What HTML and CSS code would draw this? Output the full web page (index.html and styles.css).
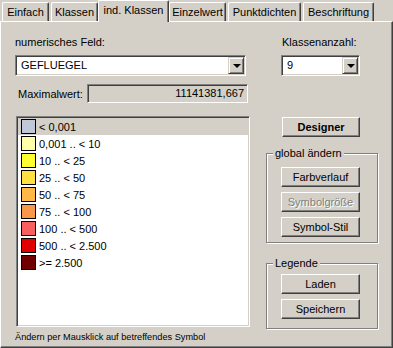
FILE: index.html
```html
<!DOCTYPE html>
<html lang="de">
<head>
  <meta charset="utf-8">
  <link rel="stylesheet" href="styles.css">
</head>
<body>
  <div class="tabs">
    <div class="tab tab-einfach">Einfach</div>
    <div class="tab tab-klassen">Klassen</div>
    <div class="tab tab-ind active">ind. Klassen</div>
    <div class="tab tab-einzel">Einzelwert</div>
    <div class="tab tab-punkt">Punktdichten</div>
    <div class="tab tab-beschr">Beschriftung</div>
  </div>

  <div class="panel">
    <div class="left">
      <div class="caption">numerisches Feld:</div>
      <div class="combo combo-feld">
        <span class="combo-value">GEFLUEGEL</span>
        <span class="drop"></span>
      </div>
      <div class="maxrow">
        <span class="maxlabel">Maximalwert:</span>
        <div class="readonly">11141381,667</div>
      </div>
      <ul class="classlist">
        <li class="selected"><span class="swatch" style="background:#c0c8d8"></span>&lt; 0,001</li>
        <li><span class="swatch" style="background:#ffffa8"></span>0,001 .. &lt; 10</li>
        <li><span class="swatch" style="background:#ffff30"></span>10 .. &lt; 25</li>
        <li><span class="swatch" style="background:#ffe040"></span>25 .. &lt; 50</li>
        <li><span class="swatch" style="background:#ffb848"></span>50 .. &lt; 75</li>
        <li><span class="swatch" style="background:#f89848"></span>75 .. &lt; 100</li>
        <li><span class="swatch" style="background:#f86060"></span>100 .. &lt; 500</li>
        <li><span class="swatch" style="background:#e00000"></span>500 .. &lt; 2.500</li>
        <li><span class="swatch" style="background:#700000"></span>&gt;= 2.500</li>
      </ul>
      <div class="hint">Ändern per Mausklick auf betreffendes Symbol</div>
    </div>

    <div class="right">
      <div class="caption caption-right">Klassenanzahl:</div>
      <div class="combo combo-anzahl">
        <span class="combo-value">9</span>
        <span class="drop"></span>
      </div>
      <button class="btn btn-designer">Designer</button>

      <div class="group group-global">
        <span class="group-title">global ändern</span>
        <button class="btn">Farbverlauf</button>
        <button class="btn" disabled>Symbolgröße</button>
        <button class="btn">Symbol-Stil</button>
      </div>

      <div class="group group-legende">
        <span class="group-title">Legende</span>
        <button class="btn">Laden</button>
        <button class="btn">Speichern</button>
      </div>
    </div>
  </div>
</body>
</html>
```

FILE: styles.css
```css
* {
  box-sizing: border-box;
}

body {
  margin: 0;
  width: 393px;
  height: 348px;
  overflow: hidden;
  background: #d4d0c8;
  font-family: "Liberation Sans", Arial, sans-serif;
  font-size: 11px;
  color: #000;
}

/* tab strip */
.tabs {
  display: flex;
  align-items: flex-end;
  height: 21px;
  padding-left: 2px;
}

.tab {
  height: 19px;
  margin-right: 2px;
  border-top: 1px solid #fff;
  border-left: 1px solid #fff;
  border-right: 1px solid #404040;
  border-radius: 2px 2px 0 0;
  box-shadow: inset -1px 0 #808080;
  text-align: center;
  line-height: 18px;
  white-space: nowrap;
}

.tab-einfach { width: 47px; }
.tab-klassen { width: 47px; }
.tab-ind { width: 67px; }
.tab-einzel { width: 57px; }
.tab-punkt { width: 73px; }
.tab-beschr { width: 71px; }

.tab.active {
  position: relative;
  z-index: 1;
  width: 71px;
  height: 22px;
  margin: 0 0 -1px -2px;
  background: #d4d0c8;
}

/* page body */
.panel {
  height: 327px;
  border-top: 1px solid #fff;
  border-left: 1px solid #fff;
  border-right: 1px solid #404040;
  border-bottom: 1px solid #404040;
  box-shadow: inset -1px -1px #808080;
  display: grid;
  grid-template-columns: 235px 113px;
  column-gap: 16px;
  align-items: start;
  padding: 14px 0 0 14px;
}

.left,
.right {
  display: flex;
  flex-direction: column;
}

.caption {
  line-height: 13px;
}

.caption-right {
  padding-left: 16px;
}

/* sunken fields */
.combo,
.readonly,
.classlist {
  border: 1px solid;
  border-color: #808080 #fff #fff #808080;
  box-shadow: inset 1px 1px #404040, inset -1px -1px #d4d0c8;
}

.combo {
  display: flex;
  align-items: center;
  height: 21px;
  margin-top: 6px;
  padding: 1px;
  background: #fff;
}

.combo-feld {
  width: 231px;
}

.combo-anzahl {
  width: 79px;
  margin-left: 15px;
}

.combo-value {
  flex: 1;
  padding-left: 4px;
  line-height: 13px;
}

.drop {
  display: flex;
  align-items: center;
  justify-content: center;
  width: 16px;
  height: 17px;
  background: #d4d0c8;
  border: 1px solid;
  border-color: #d4d0c8 #404040 #404040 #d4d0c8;
  box-shadow: inset 1px 1px #fff, inset -1px -1px #808080;
}

.drop::after {
  content: "";
  width: 0;
  height: 0;
  border-left: 4px solid transparent;
  border-right: 4px solid transparent;
  border-top: 4px solid #000;
  margin-left: 1px;
}

.maxrow {
  display: flex;
  align-items: center;
  height: 19px;
  margin-top: 8px;
}

.maxlabel {
  padding-left: 3px;
}

.readonly {
  width: 161px;
  height: 19px;
  margin-left: auto;
  margin-right: 2px;
  padding-right: 3px;
  text-align: right;
  line-height: 17px;
  background: #d4d0c8;
}

/* class list */
.classlist {
  list-style: none;
  width: 234px;
  height: 211px;
  margin: 13px 0 0 1px;
  padding: 1px;
  background: #fff;
}

.classlist li {
  display: flex;
  align-items: center;
  gap: 3px;
  height: 17px;
  padding-left: 3px;
  white-space: nowrap;
}

.classlist li.selected {
  background: #d4d0c8;
}

.swatch {
  width: 15px;
  height: 15px;
  border: 1px solid #000;
}

.hint {
  margin-top: 4px;
  font-size: 9.2px;
  line-height: 13px;
  white-space: nowrap;
}

/* buttons */
.btn {
  display: block;
  width: 79px;
  height: 20px;
  padding: 0;
  border: 1px solid;
  border-color: #fff #404040 #404040 #fff;
  box-shadow: inset -1px -1px #808080;
  background: #d4d0c8;
  font: inherit;
  color: #000;
}

.btn:disabled {
  color: #808080;
  text-shadow: 1px 1px #fff;
}

.btn-designer {
  width: 78px;
  margin: 41px 0 0 16px;
  font-weight: bold;
}

/* group boxes */
.group {
  position: relative;
  display: flex;
  flex-direction: column;
  gap: 5px;
  width: 112px;
  border: 1px solid #808080;
  box-shadow: 1px 1px 0 #fff, inset 1px 1px 0 #fff;
  padding-left: 14px;
}

.group-global {
  margin-top: 16px;
  padding-top: 13px;
  padding-bottom: 5px;
}

.group-legende {
  margin-top: 20px;
  padding-top: 10px;
  padding-bottom: 9px;
}

.group-title {
  position: absolute;
  top: -7px;
  left: 6px;
  padding: 0 2px;
  line-height: 13px;
  background: #d4d0c8;
}
```
